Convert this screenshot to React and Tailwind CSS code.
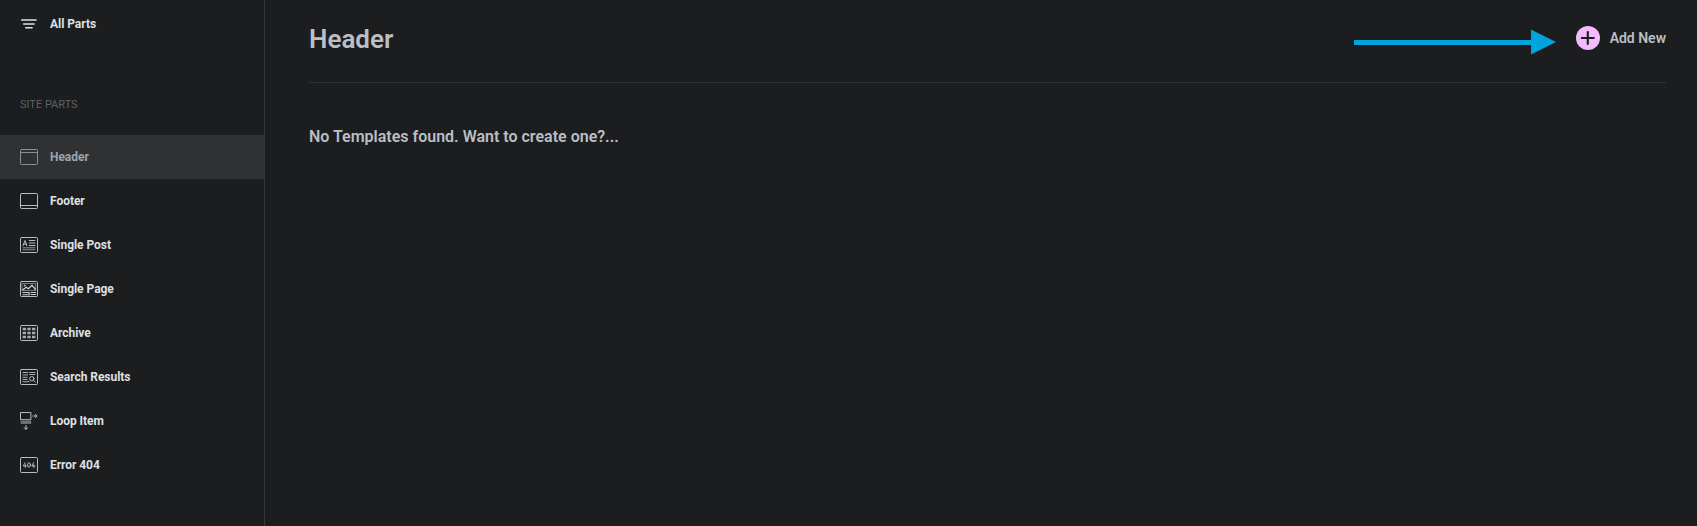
const frame = <rect x="0.5" y="0.5" width="17" height="15" rx="1" />;

function PartIcon({ children }) {
  return (
    <svg className="h-[18px] w-[18px] shrink-0 opacity-90" viewBox="0 -1 18 18" fill="none" stroke="currentColor" strokeWidth="0.9" strokeLinecap="round" strokeLinejoin="round">
      {children}
    </svg>
  );
}

const icons = {
  header: <>{frame}<path d="M0.5 3.5h17" /></>,
  footer: <>{frame}<path d="M0.5 12.5h17" /></>,
  post: (
    <>
      {frame}
      <path d="M3 8.8 5 3.5 7 8.8M3.7 7.2h2.6M9.3 3.5h5.7M9.3 6h5.7M9.3 8.5h5.7" />
      <path d="M3 10.8h12M3 12.8h12" strokeOpacity="0.75" />
    </>
  ),
  page: (
    <>
      {frame}
      <rect x="2.3" y="2.5" width="13.4" height="7" strokeOpacity="0.6" />
      <path d="M2.8 8.8 6.2 6.2l2.2 1.6L12 4.2l3.4 4.3" strokeWidth="1.3" />
      <path d="M2.8 11.5h6.4v2.2H2.8M11 11.5h4.7M11 13.5h4.7" strokeWidth="1.1" />
      <circle cx="4.7" cy="4.5" r="0.6" />
    </>
  ),
  archive: (
    <>
      {frame}
      <path
        d="M2.6 4h3.4M7.3 4h3.4M12 4h3.4M2.6 8h3.4M7.3 8h3.4M12 8h3.4M2.6 12h3.4M7.3 12h3.4M12 12h3.4"
        strokeWidth="2.3"
        strokeOpacity="0.8"
        strokeLinecap="butt"
      />
    </>
  ),
  search: (
    <>
      {frame}
      <path d="M3 3.5h4.7M9.7 3.5H15M3 5.9h4.7M9.7 5.5H15M3 8.3h4.2M3 10.5h4.2M3 12.7h6.2" strokeOpacity="0.9" />
      <circle cx="11.8" cy="9.7" r="2.2" />
      <path d="m13.5 11.4 1.8 1.8" />
    </>
  ),
  loop: (
    <g transform="translate(0 -0.6)">
      <rect x="0.9" y="0.1" width="10" height="7.2" />
      <path d="M12.9 3.6h4M15.2 1.9l1.7 1.7-1.7 1.7M5.9 13v4M4.2 15.2l1.7 1.7 1.7-1.7" />
      <path d="M0.6 9.9h10.6" strokeWidth="3.2" strokeOpacity="0.5" strokeLinecap="butt" />
    </g>
  ),
  error: (
    <>
      {frame}
      <g strokeWidth="0.85">
        <path d="M5.1 5.7 3.3 9h3.1M5.3 7.8v2.6M13.6 5.7 11.8 9h3.1M13.8 7.8v2.6" />
        <ellipse cx="9" cy="8" rx="1.4" ry="2.2" />
      </g>
    </>
  ),
};

const parts = [
  ["header", "Header"],
  ["footer", "Footer"],
  ["post", "Single Post"],
  ["page", "Single Page"],
  ["archive", "Archive"],
  ["search", "Search Results"],
  ["loop", "Loop Item"],
  ["error", "Error 404"],
];

export default function App() {
  return (
    <div className="flex h-[526px] w-full overflow-hidden bg-[#1c1d1f] font-['Roboto',sans-serif]">
      <aside className="w-[265px] shrink-0 border-r border-[#343639]">
        <a className="flex h-12 items-center gap-3 pl-5 text-xs font-bold tracking-[-0.04px] text-[#dee0e3]">
          <svg className="h-[18px] w-[18px]" viewBox="0 0 18 18" stroke="currentColor" strokeWidth="1.6" strokeLinecap="round">
            <path d="M1.7 5h14.4M3.7 9h10.4M5.7 12.8h6.4" />
          </svg>
          All Parts
        </a>
        <h2 className="mt-[49px] h-[38px] pl-5 text-[11px] leading-4 text-[#59626c]">SITE PARTS</h2>
        <nav>
          {parts.map(([id, label]) => (
            <a
              key={id}
              className={
                id === "header"
                  ? "flex h-11 items-center gap-3 bg-[#303133] pl-5 text-xs font-bold tracking-[-0.04px] text-[#9da5ae]"
                  : "flex h-11 items-center gap-3 pl-5 text-xs font-bold tracking-[-0.04px] text-[#dee0e3]"
              }
            >
              <PartIcon>{icons[id]}</PartIcon>
              {label}
            </a>
          ))}
        </nav>
      </aside>
      <main className="flex-1 pr-[31px] pl-11">
        <header className="relative flex h-[83px] justify-between border-b border-[#303133]">
          <h1 className="pt-[22px] text-[26px] leading-[34px] font-semibold text-[#babfc5]">Header</h1>
          <button className="mt-[26px] flex h-6 items-center gap-2.5 self-start text-[14px] font-semibold text-[#babfc5]">
            <svg className="h-6 w-6" viewBox="0 0 24 24">
              <circle cx="12" cy="12" r="12" fill="#f3bafd" />
              <path d="M11.8 6v12M5.8 12h12" stroke="#1c1d1f" strokeWidth="2.1" strokeLinecap="round" />
            </svg>
            Add New
          </button>
          <svg className="absolute top-[29px] right-[110px] h-[26px] w-[202px]" viewBox="0 0 202 26" fill="#00a4dc">
            <path d="M0 11h177V.6L202 13 177 25.4V16H0Z" />
          </svg>
        </header>
        <p className="mt-[43px] text-[16px] leading-[22px] font-semibold text-[#babfc5]">No Templates found. Want to create one?...</p>
      </main>
    </div>
  );
}
